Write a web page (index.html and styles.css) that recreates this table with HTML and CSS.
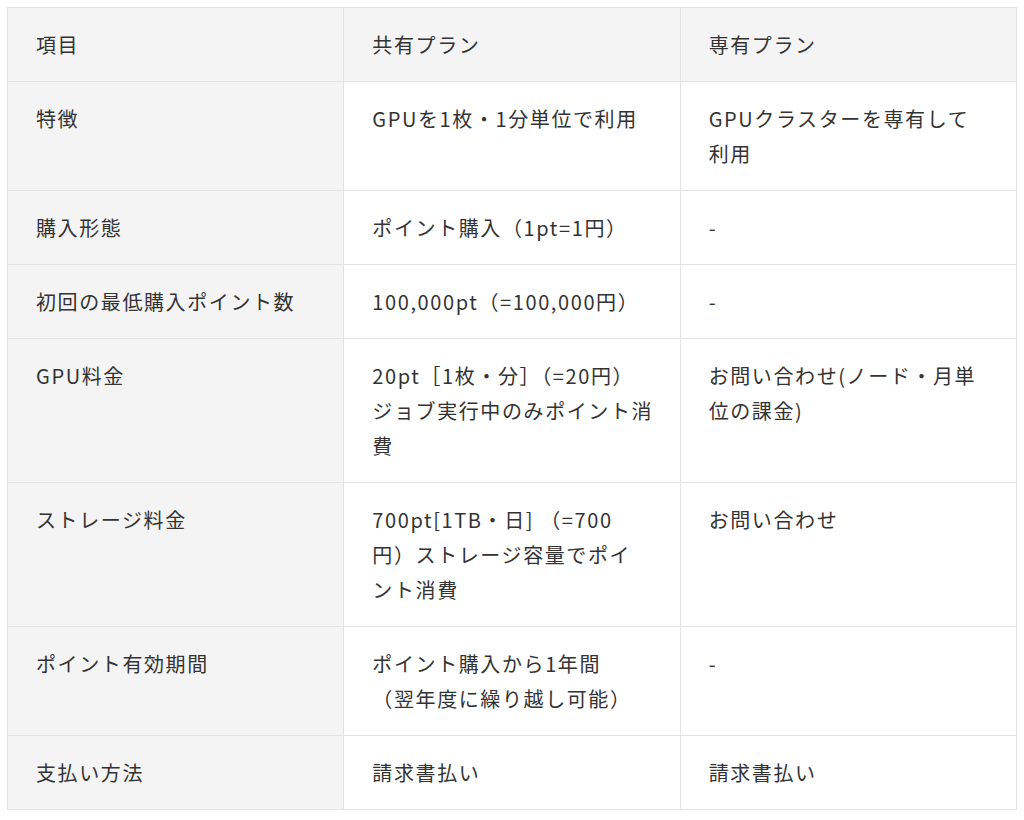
FILE: index.html
```html
<!DOCTYPE html>
<html lang="ja">
<head>
<meta charset="utf-8">
<title>プラン比較</title>
<link rel="stylesheet" href="styles.css">
</head>
<body>
<div class="wrap">
  <table class="plans">
    <thead>
      <tr>
        <th class="label">項目</th>
        <th>共有プラン</th>
        <th>専有プラン</th>
      </tr>
    </thead>
    <tbody>
      <tr>
        <th class="label">特徴</th>
        <td>GPUを1枚・1分単位で利用</td>
        <td>GPUクラスターを専有して<br>利用</td>
      </tr>
      <tr>
        <th class="label">購入形態</th>
        <td>ポイント購入（1pt=1円）</td>
        <td>-</td>
      </tr>
      <tr>
        <th class="label">初回の最低購入ポイント数</th>
        <td>100,000pt（=100,000円）</td>
        <td>-</td>
      </tr>
      <tr>
        <th class="label">GPU料金</th>
        <td>20pt［1枚・分］（=20円）<br>ジョブ実行中のみポイント消<br>費</td>
        <td>お問い合わせ(ノード・月単<br>位の課金)</td>
      </tr>
      <tr>
        <th class="label">ストレージ料金</th>
        <td>700pt[1TB・日] （=700<br>円）ストレージ容量でポイ<br>ント消費</td>
        <td>お問い合わせ</td>
      </tr>
      <tr>
        <th class="label">ポイント有効期間</th>
        <td>ポイント購入から1年間<br>（翌年度に繰り越し可能）</td>
        <td>-</td>
      </tr>
      <tr>
        <th class="label">支払い方法</th>
        <td>請求書払い</td>
        <td>請求書払い</td>
      </tr>
    </tbody>
  </table>
</div>
</body>
</html>
```

FILE: styles.css
```css
html, body {
  margin: 0;
  padding: 0;
  background: #ffffff;
}

.wrap {
  padding: 7px 7px 0 7px;
}

.plans {
  width: 1010px;
  border-collapse: collapse;
  table-layout: fixed;
  font-family: "Noto Sans CJK JP", "Noto Sans", sans-serif;
  font-size: 20px;
  line-height: 35px;
  letter-spacing: 0.08em;
  color: #333333;
}

.plans th,
.plans td {
  border: 1px solid #e3e3e3;
  padding: 19px 16px 19px 28px;
  text-align: left;
  vertical-align: top;
  font-weight: normal;
  white-space: nowrap;
}

.plans thead th {
  background: #f4f4f4;
}

.plans th.label {
  background: #f4f4f4;
}

.plans td {
  background: #ffffff;
}
```
